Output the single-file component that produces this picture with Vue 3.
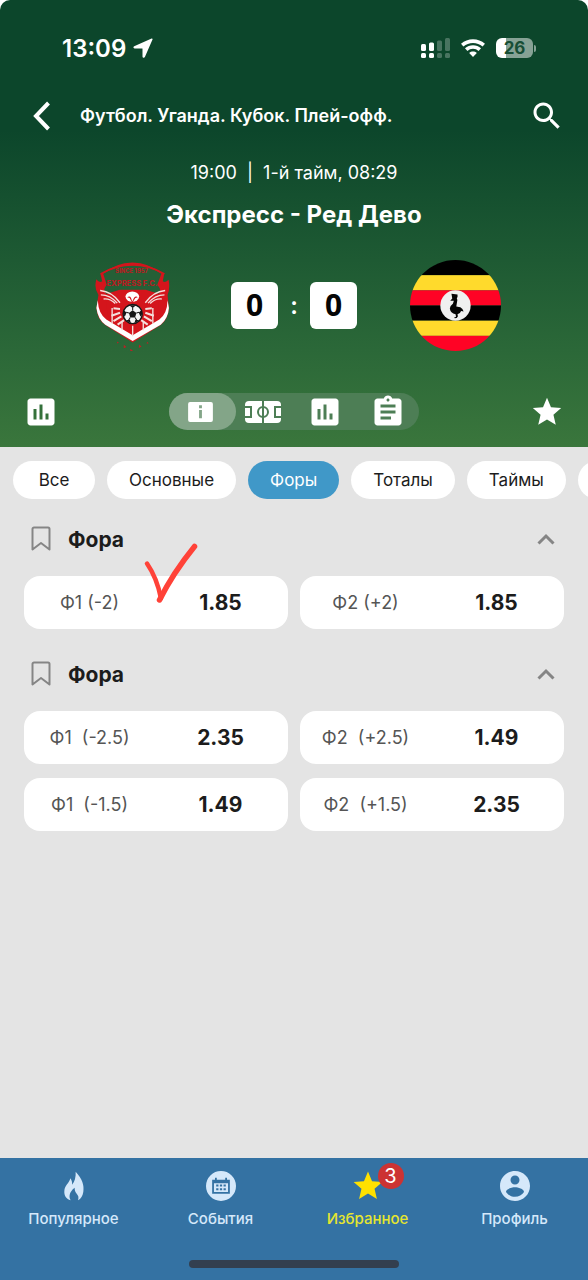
<template>
    <div class="screen">
        <header class="match-header">
            <div class="status-bar">
                <div class="status-left">
                    <span class="status-time">13:09</span>
                    <svg class="icon-location" viewBox="0 0 20 20" aria-hidden="true">
                        <path d="M18.6.5 1.2 8.2C0 8.8.3 10.5 1.6 10.5h7.5c.3 0 .4.1.4.4v7.5c0 1.4 1.8 1.8 2.4.5l7.6-17.3c.3-.8-.2-1.4-.9-1.1z" />
                    </svg>
                </div>
                <div class="status-right">
                    <svg class="icon-signal" viewBox="0 0 29 20" aria-hidden="true">
                        <rect x="0" y="6" width="5" height="7" rx="1.5" />
                        <rect x="8" y="4.5" width="5" height="8.5" rx="1.5" />
                        <rect x="0" y="15" width="5" height="5" rx="1.5" />
                        <rect x="8" y="15" width="5" height="5" rx="1.5" />
                        <g opacity="0.25">
                            <rect x="16" y="2.5" width="5" height="10.5" rx="1.5" />
                            <rect x="24" y="0" width="5" height="13" rx="1.5" />
                            <rect x="16" y="15" width="5" height="5" rx="1.5" />
                            <rect x="24" y="15" width="5" height="5" rx="1.5" />
                        </g>
                    </svg>
                    <svg class="icon-wifi" viewBox="0 0 24 18" aria-hidden="true">
                        <path d="M1.2 6.2C7.4.7 16.6.7 22.8 6.2" />
                        <path d="M5.2 10.6c3.8-3.5 9.8-3.5 13.6 0" />
                        <path class="wifi-dot" d="M8.2 14c2.2-1.9 5.4-1.9 7.6 0L12 18z" />
                    </svg>
                    <div class="battery">
                        <span class="battery-body">26</span>
                        <span class="battery-cap"></span>
                    </div>
                </div>
            </div>

            <div class="top-bar">
                <button class="icon-button" type="button" aria-label="Назад">
                    <svg class="icon-back" viewBox="0 0 18 30" aria-hidden="true">
                        <path d="M15.5 2 3 15l12.5 13" />
                    </svg>
                </button>
                <h1 class="league">Футбол. Уганда. Кубок. Плей-офф.</h1>
                <button class="icon-button" type="button" aria-label="Поиск">
                    <svg class="icon-36" viewBox="0 0 24 24" aria-hidden="true">
                        <path :d="icons.search" />
                    </svg>
                </button>
            </div>

            <p class="match-time">19:00&nbsp; |&nbsp; 1-й тайм, 08:29</p>
            <h2 class="match-title">Экспресс - Ред Дево</h2>

            <div class="scoreboard">
                <svg class="crest" viewBox="75 60 228 266" role="img" aria-label="Экспресс">
                    <path d="M94 102Q188 32 280 102L276 122Q284 128 293 118Q298 142 290 162L294 200Q292 232 270 250L188 301 108 250Q84 232 82 200L88 162Q74 142 82 116Q90 128 99 122z" fill="#d4151c" />
                    <path d="M102 100Q188 48 272 100L260 132Q276 150 262 160H112Q98 150 112 132z" fill="#255f36" />
                    <path d="M94 101Q188 48 281 101" fill="none" stroke="#d4151c" stroke-width="5" />
                    <text class="crest-small" x="185" y="98">SINCE 1957</text>
                    <text class="crest-name" x="186" y="135">EXPRESS F.C.</text>
                    <path d="M86 178Q88 218 111 234L188 280 266 234Q289 218 290 178L294 200Q292 230 270 249L188 297 108 249Q86 232 82 200z" fill="#fff" />
                    <path d="M108 160 150 147 226 147 268 160 260 222 188 262 115 222z" fill="#d4151c" />
                    <g fill="none" stroke="#f4dfdc" stroke-width="4">
                        <path d="M93 149Q128 152 151 185M95 162Q122 162 143 186M103 174Q122 172 137 187" />
                        <path d="M283 149Q248 152 225 185M281 162Q254 162 233 186M273 174Q254 172 239 187" />
                        <path d="M151 203 132 201M151 214 126 223M155 225 132 239M163 236 144 249M225 203 244 201M225 214 250 223M221 225 244 239M213 236 232 249" stroke-width="6" />
                        <path d="M128 200v46M157 238v27M188 252v31M219 238v27M247 200v46" />
                    </g>
                    <ellipse cx="187" cy="167" rx="20" ry="15" fill="#fff" />
                    <path d="M172 169q7-5 11 1l4 11 5-11q6-6 11-1l-7 2-9 14-8-14z" fill="#d4151c" />
                    <circle cx="188" cy="218" r="28" fill="#f5f5f5" stroke="#161616" stroke-width="4" />
                    <path d="M188 207 199 215 195 228 181 228 177 215zM178 192h20l-10 8zM161 205l9 9-5 12-5-8zM215 205l-9 9 5 12 5-8zM168 236l12-1 3 10zM208 236l-12-1-3 10z" fill="#161616" />
                    <path d="M188 207v-8M199 215l8-2M195 228l5 8M181 228l-5 8M177 215l-8-2" stroke="#161616" stroke-width="3" />
                    <path d="M142 298l6 4-5 2zM162 308l8 6-8 4zM180 320l9 4-7 4zM207 307l7 6-8 4zM230 299l5 4-6 2z" fill="#b72325" />
                </svg>
                <div class="score">
                    <span class="score-box">0</span>
                    <span class="score-colon">:</span>
                    <span class="score-box">0</span>
                </div>
                <svg class="flag" viewBox="0 0 90 90" role="img" aria-label="Ред Дево">
                    <clipPath id="flag-clip"><circle cx="45" cy="45" r="45" /></clipPath>
                    <g clip-path="url(#flag-clip)">
                        <rect width="90" height="15" fill="#000" />
                        <rect y="15" width="90" height="15" fill="#ffda2c" />
                        <rect y="30" width="90" height="15" fill="#ff0325" />
                        <rect y="45" width="90" height="15" fill="#000" />
                        <rect y="60" width="90" height="15" fill="#ffda2c" />
                        <rect y="75" width="90" height="15" fill="#ff0325" />
                    </g>
                    <circle cx="45" cy="45" r="15" fill="#f0f0f0" />
                    <path d="M41 33.5l6 .5v2.5l-.7 1.3q1 1.7.2 3.7l-.7 4.5 4 .8q2.500 1.2 3.2 4.2l-2.5-.6q-.6 2.6-3.5 3.2l.4 2.4-1 .6.5.6-2.4.5-1-.5 2-1-.4-2.500q-5.2-1.3-5.7-5.7 0-2.7 3-4.800l1-3-3.6.2 2-2.2z" fill="#050505" />
                </svg>
            </div>

            <div class="toolbar">
                <button class="icon-button" type="button" aria-label="Статистика">
                    <svg class="icon-36" viewBox="0 0 24 24" aria-hidden="true">
                        <path :d="icons.chart" />
                    </svg>
                </button>
                <div class="view-switch">
                    <button class="view-button active" type="button" aria-label="Информация">
                        <svg class="icon-info" viewBox="0 0 26 21" aria-hidden="true">
                            <path fill-rule="evenodd" d="M2 0h22a2 2 0 0 1 2 2v17a2 2 0 0 1-2 2H2a2 2 0 0 1-2-2V2a2 2 0 0 1 2-2zM11.5 3.5v3h3v-3zM11.5 8.5v8.5h3V8.5z" />
                        </svg>
                    </button>
                    <button class="view-button" type="button" aria-label="Поле">
                        <svg class="icon-field" viewBox="0 0 36 22" aria-hidden="true">
                            <rect width="36" height="22" rx="4" />
                            <path d="M18 0v5.5M18 16.5V22M0 6h6v10H0M36 6h-6v10h6M18 5.5v11" />
                            <circle cx="18" cy="11" r="5" />
                        </svg>
                    </button>
                    <button class="view-button" type="button" aria-label="График">
                        <svg class="icon-36" viewBox="0 0 24 24" aria-hidden="true">
                            <path :d="icons.chart" />
                        </svg>
                    </button>
                    <button class="view-button" type="button" aria-label="События матча">
                        <svg class="icon-36" viewBox="0 0 24 24" aria-hidden="true">
                            <path :d="icons.clipboard" />
                        </svg>
                    </button>
                </div>
                <button class="icon-button" type="button" aria-label="В избранное">
                    <svg class="icon-star" viewBox="0 0 24 24" aria-hidden="true">
                        <path :d="icons.star" />
                    </svg>
                </button>
            </div>
        </header>

        <main class="markets">
            <div class="filters">
                <button
                    v-for="filter in filters"
                    :key="filter"
                    class="chip"
                    :class="{ active: filter === activeFilter }"
                    type="button"
                    @click="activeFilter = filter"
                >
                    {{ filter }}
                </button>
                <button class="chip" type="button" aria-label="Ещё"></button>
            </div>

            <section v-for="market in markets" :key="market.id" class="market">
                <div class="market-head">
                    <svg class="icon-bookmark" viewBox="0 0 20 26" aria-hidden="true">
                        <path d="M3 1.5h14a1.5 1.5 0 0 1 1.5 1.5v20.5L10 17l-8.5 6.5V3A1.5 1.5 0 0 1 3 1.5z" />
                    </svg>
                    <h3 class="market-title">{{ market.title }}</h3>
                    <button
                        class="icon-button"
                        type="button"
                        aria-label="Свернуть"
                        @click="market.open = !market.open"
                    >
                        <svg class="icon-chevron" :class="{ closed: !market.open }" viewBox="0 0 18 12" aria-hidden="true">
                            <path d="M1.5 10.5 9 3l7.5 7.5" />
                        </svg>
                    </button>
                </div>
                <div v-if="market.open" class="odds-grid">
                    <button v-for="odd in market.odds" :key="odd.label" class="odd" type="button">
                        <span class="odd-label">{{ odd.label }}</span>
                        <span class="odd-value">{{ odd.value }}</span>
                        <svg v-if="odd.marked" class="mark" viewBox="0 0 56 64" aria-hidden="true">
                            <path d="M5 21.5Q15 36 19 56.5" stroke-width="4.5" />
                            <path d="M17.5 58Q31 31 52.5 4.5" stroke-width="5.5" />
                        </svg>
                    </button>
                </div>
            </section>
        </main>

        <footer class="tab-bar">
            <nav class="tabs">
                <a v-for="tab in tabs" :key="tab.label" class="tab" :class="{ active: tab.active }" href="#">
                    <span class="tab-icon">
                        <svg class="icon-36" :viewBox="tab.box" aria-hidden="true">
                            <path fill-rule="evenodd" :d="tab.icon" />
                        </svg>
                        <span v-if="tab.badge" class="badge">{{ tab.badge }}</span>
                    </span>
                    <span>{{ tab.label }}</span>
                </a>
            </nav>
            <div class="home-indicator"></div>
        </footer>
    </div>
</template>

<script setup>
import { ref } from 'vue';

const icons = {
    search: 'M15.5 14h-.79l-.28-.27C15.41 12.59 16 11.11 16 9.5 16 5.91 13.09 3 9.5 3S3 5.91 3 9.5 5.91 16 9.5 16c1.61 0 3.09-.59 4.23-1.57l.27.28v.79l5 4.99L20.49 19l-4.99-5zm-6 0C7.01 14 5 11.99 5 9.5S7.01 5 9.5 5 14 7.01 14 9.5 11.99 14 9.5 14z',
    chart: 'M19 3H5c-1.1 0-2 .9-2 2v14c0 1.1.9 2 2 2h14c1.1 0 2-.9 2-2V5c0-1.1-.9-2-2-2zM9 17H7v-7h2v7zm4 0h-2V7h2v10zm4 0h-2v-4h2v4z',
    clipboard: 'M19 3h-4.18C14.4 1.84 13.3 1 12 1c-1.3 0-2.4.84-2.82 2H5c-1.1 0-2 .9-2 2v14c0 1.1.9 2 2 2h14c1.1 0 2-.9 2-2V5c0-1.1-.9-2-2-2zm-7 0c.55 0 1 .45 1 1s-.45 1-1 1-1-.45-1-1 .45-1 1-1zm2 14H7v-2h7v2zm3-4H7v-2h10v2zm0-4H7V7h10v2z',
    star: 'M12 17.27L18.18 21l-1.64-7.03L22 9.24l-7.19-.61L12 2 9.19 8.63 2 9.24l5.46 4.73L5.82 21z',
    flame: 'M35 0C55 22 61 40 58 60C56 73 51 81 42 86C45 76 43 72 38 66C33 60 32 55 32 48C24 54 18 62 17 70C16 76 17 81 20 86C7 82 0 72 1 58C2 42 16 34 19 20C24 27 25 32 24 39C32 30 36 16 35 0z',
    calendar: 'M12 2a10 10 0 1 0 0 20 10 10 0 0 0 0-20zM8 6.5h1.2v1.3h5.6V6.5H16v1.3h1.9v9.4H6.1V7.8H8zM7.3 10.2v5.8h9.4v-5.8zM8.8 11h1.5v1.4H8.8zM11.25 11h1.5v1.4h-1.5zM13.7 11h1.5v1.4h-1.5zM8.8 13.5h1.5v1.4H8.8zM11.25 13.5h1.5v1.4h-1.5zM13.7 13.5h1.5v1.4h-1.5z',
    profile: 'M12 2C6.48 2 2 6.48 2 12s4.48 10 10 10 10-4.48 10-10S17.52 2 12 2zm0 3c1.66 0 3 1.34 3 3s-1.34 3-3 3-3-1.34-3-3 1.34-3 3-3zm0 14.2c-2.5 0-4.71-1.28-6-3.22.03-1.99 4-3.08 6-3.08 1.99 0 5.97 1.09 6 3.08-1.29 1.94-3.5 3.22-6 3.22z'
};

const filters = ['Все', 'Основные', 'Форы', 'Тоталы', 'Таймы'];
const activeFilter = ref('Форы');

const markets = ref([
    {
        id: 1,
        title: 'Фора',
        open: true,
        odds: [
            { label: 'Ф1 (-2)', value: '1.85', marked: true },
            { label: 'Ф2 (+2)', value: '1.85' }
        ]
    },
    {
        id: 2,
        title: 'Фора',
        open: true,
        odds: [
            { label: 'Ф1  (-2.5)', value: '2.35' },
            { label: 'Ф2  (+2.5)', value: '1.49' },
            { label: 'Ф1  (-1.5)', value: '1.49' },
            { label: 'Ф2  (+1.5)', value: '2.35' }
        ]
    }
]);

const tabs = [
    { label: 'Популярное', icon: icons.flame, box: '-24 -11 108 108' },
    { label: 'События', icon: icons.calendar, box: '0 0 24 24' },
    { label: 'Избранное', icon: icons.star, box: '-0.5 -0.5 25 25', active: true, badge: 3 },
    { label: 'Профиль', icon: icons.profile, box: '0 0 24 24' }
];
</script>

<style>
body {
    margin: 0;
    background: #fff;
}
</style>

<style scoped>
.screen {
    min-height: 100vh;
    display: flex;
    flex-direction: column;
    overflow: hidden;
    font-family: Inter, 'Liberation Sans', sans-serif;
    color: #1c1c1c;
}

button {
    margin: 0;
    padding: 0;
    border: 0;
    background: none;
    color: inherit;
    font: inherit;
    cursor: pointer;
}

h1,
h2,
h3,
p {
    margin: 0;
}

svg {
    display: block;
    flex: none;
    fill: currentColor;
}

.icon-36 {
    width: 36px;
    height: 36px;
}

.icon-button {
    flex: none;
    width: 36px;
    height: 36px;
    display: flex;
    align-items: center;
    justify-content: center;
}

/* Header */
.match-header {
    padding-bottom: 17px;
    border-radius: 10px 10px 0 0;
    background: linear-gradient(#0c462b 0, #0c462b 130px, #1e5a33 260px, #2b6838 350px, #3a763c 100%);
    color: #fff;
}

.status-bar {
    height: 96px;
    padding: 0 52px 0 62px;
    display: flex;
    align-items: center;
    justify-content: space-between;
}

.status-left,
.status-right {
    display: flex;
    align-items: center;
}

.status-left {
    gap: 7px;
}

.status-right {
    gap: 11px;
}

.status-time {
    font-size: 24px;
    font-weight: 600;
}

.icon-location {
    width: 20px;
    height: 20px;
}

.icon-signal {
    width: 29px;
    height: 20px;
}

.icon-wifi {
    width: 24px;
    height: 18px;
    fill: none;
    stroke: currentColor;
    stroke-width: 3.6;
}

.wifi-dot {
    fill: currentColor;
    stroke: none;
}

.battery {
    display: flex;
    align-items: center;
    gap: 1px;
}

.battery-body {
    width: 37px;
    height: 20px;
    border-radius: 6px;
    background: linear-gradient(90deg, #fff 26%, #86a295 26%);
    color: #174e35;
    font-size: 17px;
    font-weight: 700;
    line-height: 20px;
    text-align: center;
}

.battery-cap {
    width: 2px;
    height: 7px;
    border-radius: 0 2px 2px 0;
    background: #86a295;
}

.top-bar {
    height: 40px;
    padding: 0 23px 0 24px;
    display: flex;
    align-items: center;
}

.icon-back {
    width: 18px;
    height: 30px;
    fill: none;
    stroke: currentColor;
    stroke-width: 4;
}

.league {
    flex: 1;
    padding-left: 20px;
    font-size: 18px;
    font-weight: 600;
    line-height: 24px;
}

.match-time {
    padding-top: 25px;
    font-size: 18px;
    line-height: 24px;
    text-align: center;
}

.match-title {
    padding-top: 14px;
    font-size: 24px;
    font-weight: 700;
    line-height: 32px;
    text-align: center;
}

.scoreboard {
    padding: 29px 34px 0;
    display: grid;
    grid-template-columns: 1fr auto 1fr;
    align-items: center;
    justify-items: center;
}

.crest {
    width: 78px;
    height: 91px;
}

.crest-small,
.crest-name {
    fill: #b51d22;
    font-weight: 800;
    text-anchor: middle;
}

.crest-small {
    font-size: 17px;
}

.crest-name {
    font-size: 22px;
}

.score {
    display: flex;
    align-items: center;
}

.score-box {
    width: 47px;
    height: 47px;
    border-radius: 6px;
    background: #fff;
    color: #050505;
    font-family: 'Open Sans', sans-serif;
    font-size: 30px;
    font-weight: 700;
    line-height: 46px;
    text-align: center;
}

.score-colon {
    width: 32px;
    font-size: 24px;
    font-weight: 600;
    text-align: center;
}

.flag {
    width: 91px;
    height: 91px;
}

.toolbar {
    padding: 42px 23px 0;
    display: flex;
    align-items: center;
    justify-content: space-between;
}

.view-switch {
    width: 250px;
    height: 37px;
    display: flex;
    border-radius: 19px;
    background: #4d7e55;
}

.view-button {
    flex: 1;
    position: relative;
    display: flex;
    align-items: center;
    justify-content: center;
}

.view-button.active::before {
    content: '';
    position: absolute;
    inset: 0 -4px 0 0;
    border-radius: 19px;
    background: #83a588;
}

.icon-info {
    position: relative;
    width: 25px;
    height: 20px;
}

.icon-field {
    width: 36px;
    height: 22px;
}

.icon-field path,
.icon-field circle {
    fill: none;
    stroke: #4d7e55;
    stroke-width: 2;
}

.icon-star {
    width: 34px;
    height: 34px;
}

/* Markets */
.markets {
    flex: 1;
    padding-bottom: 24px;
    background: #e4e4e4;
}

.filters {
    padding: 14px 0 0 13px;
    display: flex;
    gap: 12px;
    overflow: hidden;
}

.chip {
    flex: none;
    min-width: 82px;
    height: 38px;
    padding: 0 22px;
    border-radius: 19px;
    background: #fff;
    font-size: 17px;
}

.chip.active {
    background: #4098c8;
    color: #fff;
}

.market {
    padding: 21px 24px 0;
}

.market + .market {
    padding-top: 26px;
}

.market-head {
    height: 38px;
    padding-left: 7px;
    display: flex;
    align-items: center;
}

.icon-bookmark {
    width: 20px;
    height: 26px;
    fill: none;
    stroke: #858585;
    stroke-width: 2;
    stroke-linejoin: round;
}

.market-title {
    flex: 1;
    padding-left: 17px;
    font-size: 21px;
    font-weight: 700;
}

.icon-chevron {
    width: 18px;
    height: 12px;
    fill: none;
    stroke: #858585;
    stroke-width: 3;
}

.icon-chevron.closed {
    transform: rotate(180deg);
}

.odds-grid {
    padding-top: 18px;
    display: grid;
    grid-template-columns: 1fr 1fr;
    gap: 14px 12px;
}

.odd {
    position: relative;
    height: 53px;
    padding-right: 2px;
    display: grid;
    grid-template-columns: 1fr 1fr;
    align-items: center;
    border-radius: 16px;
    background: #fff;
    text-align: center;
}

.odd-label {
    color: #555;
    font-size: 18px;
    white-space: pre;
}

.odd-value {
    font-size: 21px;
    font-weight: 700;
}

.mark {
    position: absolute;
    top: -34px;
    left: 118px;
    width: 56px;
    height: 64px;
    fill: none;
    stroke: #ff4238;
    stroke-linecap: round;
}

/* Bottom navigation */
.tab-bar {
    padding: 10px 0 12px;
    background: #3472a3;
}

.tabs {
    display: grid;
    grid-template-columns: repeat(4, 1fr);
}

.tab {
    display: flex;
    flex-direction: column;
    align-items: center;
    gap: 5px;
    color: #d5e8fa;
    font-size: 15px;
    font-weight: 500;
    line-height: 20px;
    text-decoration: none;
}

.tab.active {
    color: #e6e62e;
}

.tab-icon {
    position: relative;
}

.tab.active .icon-36 {
    fill: #ffe100;
}

.badge {
    position: absolute;
    top: -5px;
    left: 28px;
    width: 26px;
    height: 26px;
    border-radius: 50%;
    background: #cc3333;
    color: #fff;
    font-size: 20px;
    font-weight: 400;
    line-height: 26px;
    text-align: center;
}

.home-indicator {
    width: 210px;
    height: 8px;
    margin: 31px auto 0;
    border-radius: 4px;
    background: #333f4f;
}
</style>
